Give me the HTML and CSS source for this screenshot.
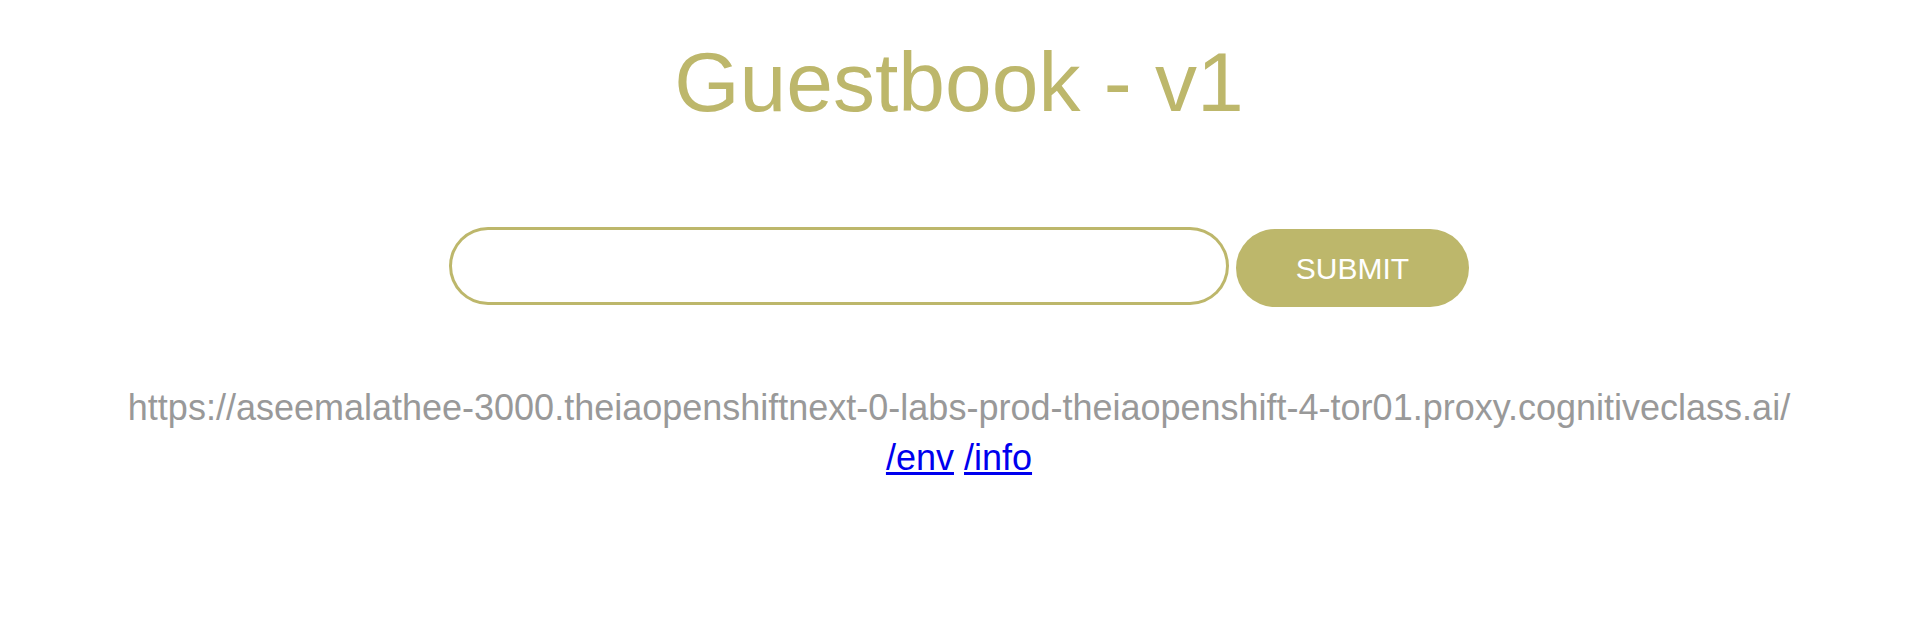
FILE: index.html
```html
<!DOCTYPE html>
<html>
<head>
<meta charset="utf-8">
<title>Guestbook</title>
<link rel="stylesheet" href="styles.css">
</head>
<body>
<div class="section header">
  <h1 class="title">Guestbook - v1</h1>
</div>
<div class="section entries"></div>
<div class="section">
  <form class="gb-form">
    <input class="gb-input" autocomplete="off" type="text"><a href="#" class="gb-submit">Submit</a>
  </form>
</div>
<div class="section footer">
  <h2 class="host">https://aseemalathee-3000.theiaopenshiftnext-0-labs-prod-theiaopenshift-4-tor01.proxy.cognitiveclass.ai/</h2>
  <p class="links"><a href="env" class="link">/env</a> <a href="info" class="link">/info</a></p>
</div>
</body>
</html>
```

FILE: styles.css
```css
body {
  margin: 10px 12px 12px;
  color: #123;
  font-family: "Liberation Sans", Arial, sans-serif;
  background: #fff;
}
.section {
  overflow: hidden;
  padding: 24px 0;
  position: relative;
  text-align: center;
}
.title {
  color: #BDB76B;
  font-size: 84px;
  font-weight: 300;
  margin: 0;
}
.entries {
  padding: 24px 0;
}
.gb-form {
  margin: 0 auto;
  max-width: 1200px;
  text-align: center;
}
.gb-input {
  border: 0;
  border-radius: 1000px;
  box-shadow: inset 0 0 0 3px #BDB76B;
  display: inline;
  font-family: "Liberation Sans", Arial, sans-serif;
  font-size: 36px;
  margin: 0 0 36px 0;
  outline: none;
  padding: 18px 5%;
  width: 55%;
  color: #123;
}
.gb-submit {
  background: #BDB76B;
  border-radius: 1000px;
  color: #fff;
  font-size: 30px;
  padding: 22.5px 60px;
  text-decoration: none;
  text-transform: uppercase;
  margin-left: 7px;
}
.host {
  color: #999;
  font-size: 36px;
  font-weight: 300;
  margin: -2px 0 0;
}
.links {
  font-size: 36px;
  margin: 2px 0 0;
  line-height: 1.5;
}
.link {
  color: #0000EE;
}
```
